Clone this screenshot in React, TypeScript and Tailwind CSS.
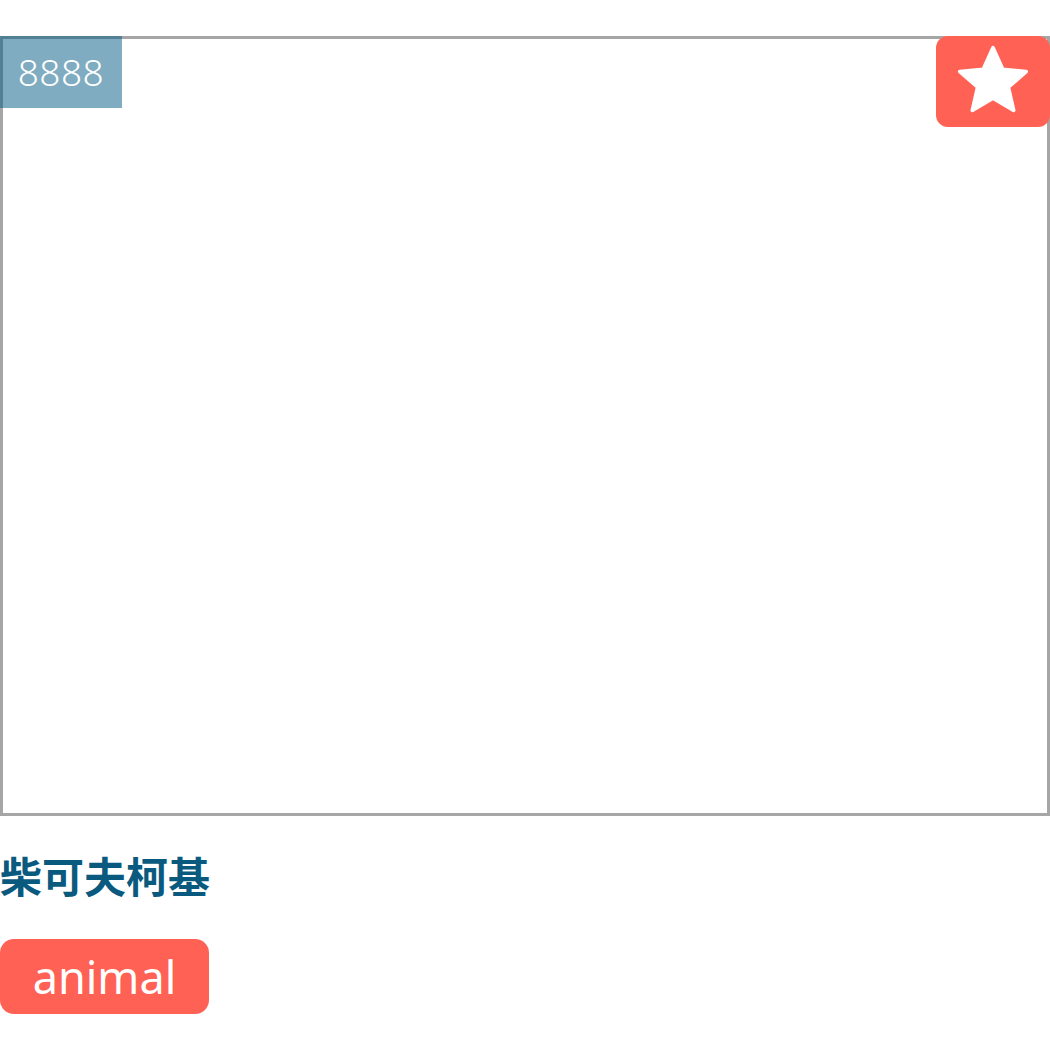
export default function App() {
  return (
    <div className="pt-[36px] font-['Noto_Sans','Noto_Sans_CJK_SC',sans-serif]">
      <div className="relative h-[780px] w-full border-[3px] border-[#a6a6a6] bg-white">
        <div className="absolute -left-[3px] -top-[3px] flex h-[72px] w-[122px] items-center justify-center bg-[rgba(0,90,130,0.5)] text-[37px] font-light tracking-[0.5px] text-white">
          8888
        </div>
        <button className="absolute -right-[3px] -top-[3px] flex h-[91px] w-[114px] items-center justify-center rounded-[12px] bg-[#ff6155]">
          <svg width="76" height="72" viewBox="0 0 24 23" className="-mt-[3px]">
            <polygon
              points="12,1.2 15.1,8.1 22.6,8.8 16.9,13.8 18.6,21.2 12,17.3 5.4,21.2 7.1,13.8 1.4,8.8 8.9,8.1"
              fill="white"
              stroke="white"
              strokeWidth="1.2"
              strokeLinejoin="round"
            />
          </svg>
        </button>
      </div>
      <h2 className="mt-[34px] text-[42px] font-bold leading-[1.2] text-[#0a5a80] font-['Noto_Sans_CJK_SC',sans-serif]">
        柴可夫柯基
      </h2>
      <div className="mt-[39px]">
        <span className="inline-flex h-[75px] w-[209px] items-center justify-center rounded-[14px] bg-[#ff6155] text-[45px] text-white">
          animal
        </span>
      </div>
    </div>
  );
}
